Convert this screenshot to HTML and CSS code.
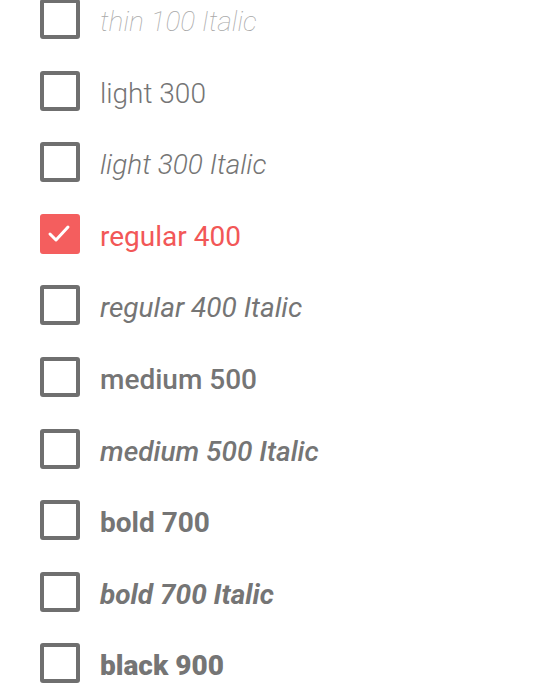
FILE: index.html
```html
<!DOCTYPE html>
<html lang="en">

<head>
  <meta charset="UTF-8">
  <title>Font Weights</title>
  <link rel="stylesheet" href="styles.css">
</head>

<body>

  <ul class="weight-list">
    <li class="weight-item">
      <span class="box"></span>
      <span class="label w100 italic">thin 100 Italic</span>
    </li>
    <li class="weight-item">
      <span class="box"></span>
      <span class="label w300">light 300</span>
    </li>
    <li class="weight-item">
      <span class="box"></span>
      <span class="label w300 italic">light 300 Italic</span>
    </li>
    <li class="weight-item checked">
      <span class="box">
        <svg viewBox="0 0 40 40" width="40" height="40">
          <polyline points="10,20 16,26 28,13" fill="none" stroke="#fff" stroke-width="3" stroke-linecap="round" stroke-linejoin="round"/>
        </svg>
      </span>
      <span class="label w400">regular 400</span>
    </li>
    <li class="weight-item">
      <span class="box"></span>
      <span class="label w400 italic">regular 400 Italic</span>
    </li>
    <li class="weight-item">
      <span class="box"></span>
      <span class="label w500">medium 500</span>
    </li>
    <li class="weight-item">
      <span class="box"></span>
      <span class="label w500 italic">medium 500 Italic</span>
    </li>
    <li class="weight-item">
      <span class="box"></span>
      <span class="label w700">bold 700</span>
    </li>
    <li class="weight-item">
      <span class="box"></span>
      <span class="label w700 italic">bold 700 Italic</span>
    </li>
    <li class="weight-item">
      <span class="box"></span>
      <span class="label w900">black 900</span>
    </li>
  </ul>

</body>

</html>
```
FILE: styles.css
```css
* {
  box-sizing: border-box;
}

body {
  margin: 0;
  padding: 0;
  background: #ffffff;
  font-family: Roboto, 'Liberation Sans', sans-serif;
  overflow: hidden;
}

.weight-list {
  list-style: none;
  margin: -16.8px 0 0;
  padding: 0 0 0 40px;
}

.weight-item {
  display: flex;
  align-items: center;
  gap: 20px;
  height: 71.6px;
}

.box {
  flex: 0 0 40px;
  width: 40px;
  height: 40px;
  border: 4px solid #6f6f6f;
  border-radius: 3px;
}

.box svg {
  display: block;
  margin: -4px;
}

.checked .box {
  background: #f45e5e;
  border-color: #f45e5e;
}

.label {
  font-size: 28px;
  color: #757575;
  line-height: 1;
  padding-top: 6px;
}

.checked .label {
  color: #f25757;
}

.italic {
  font-style: italic;
}

.w100 { font-weight: 100; color: #a8a8a8; }
.w300 { font-weight: 300; }
.w400 { font-weight: 400; }
.w500 { font-weight: 500; }
.w700 { font-weight: 700; }
.w900 { font-weight: 900; }
```
